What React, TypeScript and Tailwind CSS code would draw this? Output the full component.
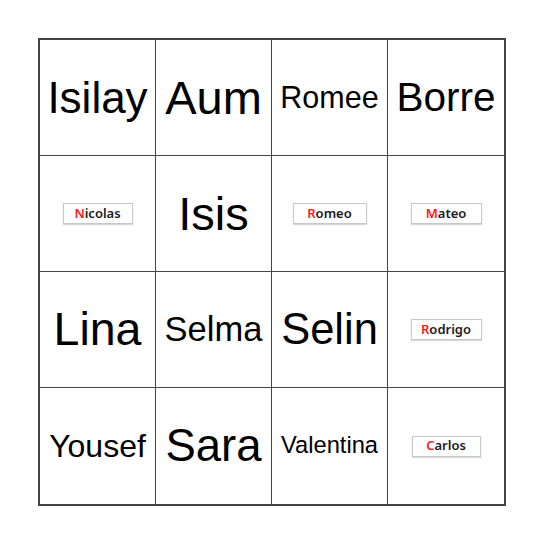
import React from "react"

type Cell = { text: string; size?: number; tag?: boolean; w?: number }

const cells: Cell[] = [
  { text: "Isilay", size: 44 },
  { text: "Aum", size: 47 },
  { text: "Romee", size: 30.5 },
  { text: "Borre", size: 40.5 },
  { text: "Nicolas", tag: true, w: 70 },
  { text: "Isis", size: 47 },
  { text: "Romeo", tag: true, w: 74 },
  { text: "Mateo", tag: true, w: 71 },
  { text: "Lina", size: 46.5 },
  { text: "Selma", size: 34.5 },
  { text: "Selin", size: 43.5 },
  { text: "Rodrigo", tag: true, w: 71 },
  { text: "Yousef", size: 32 },
  { text: "Sara", size: 45.5 },
  { text: "Valentina", size: 23.7 },
  { text: "Carlos", tag: true, w: 69 },
]

function Tag({ text, w }: { text: string; w?: number }) {
  return (
    <div
      className="h-[21px] border border-[#c8c8c8] flex items-center justify-center text-[13px] font-semibold text-[#1a1a1a] shadow-[0_1px_1px_rgba(0,0,0,0.15)]"
      style={{ width: w, fontFamily: '"Noto Sans", "Open Sans", sans-serif' }}
    >
      <span className="text-[#ff1a1a]">{text[0]}</span>
      {text.slice(1)}
    </div>
  )
}

export default function App() {
  return (
    <div className="w-[544px] h-[544px] bg-white flex items-start justify-start">
      <div className="ml-[38px] mt-[38px] w-[468px] h-[468px] border-2 border-[#444] grid grid-cols-4 grid-rows-4">
        {cells.map((c, i) => (
          <div
            key={i}
            className={
              "flex items-center justify-center border-[#444] " +
              (i % 4 !== 3 ? "border-r " : "") +
              (i < 12 ? "border-b" : "")
            }
          >
            {c.tag ? (
              <Tag text={c.text} w={c.w} />
            ) : (
              <span
                className="text-black leading-none"
                style={{ fontSize: c.size, fontFamily: '"Liberation Sans", Arial, sans-serif' }}
              >
                {c.text}
              </span>
            )}
          </div>
        ))}
      </div>
    </div>
  )
}
